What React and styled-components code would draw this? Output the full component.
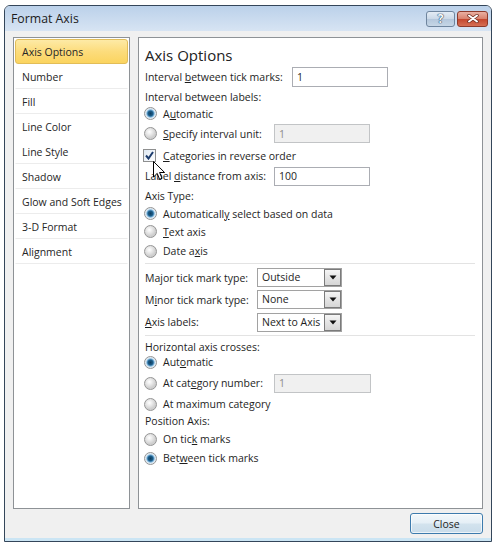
import React from 'react';
import styled, { createGlobalStyle } from 'styled-components';

const GlobalStyle = createGlobalStyle`
  body {
    margin: 0;
    background: #ffffff;
  }
`;

const Window = styled.div`
  margin: 5px 0 0 4px;
  width: 488px;
  height: 537px;
  box-sizing: border-box;
  border: 1px solid #34465a;
  border-radius: 6px 6px 0 0;
  display: flex;
  flex-direction: column;
  background: #f0f0f0;
  overflow: hidden;
  font-family: "Open Sans", "Noto Sans", sans-serif;
  color: #1e1e1e;
`;

const TitleBar = styled.div`
  height: 25px;
  flex: none;
  display: flex;
  align-items: center;
  padding: 0 3px 0 6px;
  background: linear-gradient(#bbd1ea, #d7e4f3);
`;

const Title = styled.div`
  flex: 1;
  font-size: 12.3px;
  color: #1b1b1b;
`;

const CaptionButton = styled.div`
  width: ${({ $w }) => $w}px;
  height: 16px;
  margin-left: 2px;
  box-sizing: border-box;
  border: 1px solid ${({ $red }) => ($red ? '#8d3a2b' : '#6f859e')};
  border-radius: 3px;
  display: flex;
  align-items: center;
  justify-content: center;
  background: ${({ $red }) => ($red
    ? 'linear-gradient(#eab0a2, #d9826e 48%, #c4472e 52%, #d66f54)'
    : 'linear-gradient(#e4ecf5, #cbd9e8 48%, #b4c7dc 52%, #c6d6e6)')};
  font-size: 12px;
  font-weight: bold;
  color: #f6f9fc;
  text-shadow: 0 0 1px #2a4565, 0 0 1px #2a4565, 0 0 1px #2a4565;
`;

const Body = styled.div`
  flex: 1;
  display: flex;
  flex-direction: column;
  padding: 6px 8px 4px;
`;

const Panels = styled.div`
  height: 472px;
  display: flex;
  gap: 8px;
`;

const NavList = styled.div`
  width: 117px;
  box-sizing: border-box;
  border: 1px solid #8e9296;
  background: #ffffff;
  padding: 1px;
`;

const NavItem = styled.div`
  height: 25px;
  box-sizing: border-box;
  display: flex;
  align-items: center;
  padding-left: 6px;
  font-size: 10.5px;
  color: #262626;
  border: 1px solid transparent;
  border-bottom-color: ${({ $line }) => ($line ? '#ececec' : 'transparent')};
  ${({ $active }) => $active && `
    border: 1px solid #e2bd58;
    border-radius: 3px;
    background: linear-gradient(#fdeaa6, #fcdc7c 50%, #fbd45f);
  `}
`;

const Content = styled.div`
  flex: 1;
  position: relative;
  box-sizing: border-box;
  border: 1px solid #8e9296;
  background: #ffffff;
  padding: 0 7px 0 6px;
`;

const Heading = styled.div`
  height: 29px;
  box-sizing: border-box;
  padding-top: 7px;
  line-height: 20px;
  font-size: 15px;
  color: #222222;
`;

const Row = styled.div`
  height: ${({ $h }) => $h}px;
  display: flex;
  align-items: center;
  font-size: 10.5px;
`;

const Label = styled.span`
  flex: none;
  width: ${({ $w }) => ($w ? `${$w}px` : 'auto')};
  white-space: nowrap;
`;

const Key = styled.span`
  text-decoration: underline;
`;

const Radio = styled.span`
  flex: none;
  width: 13px;
  height: 13px;
  margin: 0 6px 0 -1px;
  box-sizing: border-box;
  border-radius: 50%;
  border: 1px solid #959595;
  background: ${({ $on }) => ($on
    ? 'radial-gradient(circle, #0f3d5e 0, #1d5f8c 2.5px, #6aa7d2 3.5px, #d6e6f2 4.5px, #eef2f5 6px)'
    : 'radial-gradient(circle at 40% 35%, #ffffff 0, #e8e8e8 3px, #cfcfcf 6px)')};
`;

const Check = styled.span`
  flex: none;
  width: 13px;
  height: 13px;
  margin: 0 7px 0 -2px;
  box-sizing: border-box;
  border: 1px solid #8e8f8f;
  background: linear-gradient(135deg, #dfe9f3, #ffffff);
  display: flex;
  align-items: center;
  justify-content: center;
`;

const TextBox = styled.input`
  width: ${({ $w }) => $w}px;
  height: ${({ $h }) => $h}px;
  box-sizing: border-box;
  border: 1px solid ${({ disabled }) => (disabled ? '#c2c4c6' : '#abadb3')};
  background: ${({ disabled }) => (disabled ? '#f0f0f0' : '#ffffff')};
  color: ${({ disabled }) => (disabled ? '#8c8c8c' : '#1e1e1e')};
  padding: 0 4px;
  margin: 0;
  font-family: "Open Sans", "Noto Sans", sans-serif;
  font-size: 10.5px;
  outline: none;
`;

const Select = styled.div`
  width: 85px;
  height: 19px;
  box-sizing: border-box;
  border: 1px solid #a2a2a2;
  display: flex;
  align-items: stretch;
  background: #ffffff;
`;

const SelectValue = styled.span`
  flex: 1;
  padding-left: 4px;
  line-height: 17px;
  white-space: nowrap;
  overflow: hidden;
`;

const DropButton = styled.span`
  width: 17px;
  flex: none;
  box-sizing: border-box;
  border: 1px solid #7b7b7b;
  background: linear-gradient(#f5f5f5, #e4e4e4 50%, #d6d6d6);
  display: flex;
  align-items: center;
  justify-content: center;
`;

const Divider = styled.div`
  height: 1px;
  margin: 2px 0 3px;
  background: #e3e3e3;
`;

const Cursor = styled.svg`
  position: absolute;
  left: 14px;
  top: 123px;
`;

const Footer = styled.div`
  margin-top: 4px;
  display: flex;
  justify-content: flex-end;
`;

const CloseButton = styled.button`
  width: 73px;
  height: 21px;
  box-sizing: border-box;
  border: 1px solid #3d7bad;
  border-radius: 3px;
  background: linear-gradient(#f3f8fb, #e5eff6 48%, #d3e3ee 52%, #c9dcea);
  box-shadow: inset 0 0 0 1px #ffffffaa;
  font-family: "Open Sans", "Noto Sans", sans-serif;
  font-size: 10.5px;
  color: #1e1e1e;
  padding: 0;
`;

const BottomEdge = styled.div`
  height: 4px;
  flex: none;
  background: #cbe5f4;
`;

const navItems = [
  { text: 'Axis Options', active: true },
  { text: 'Number', line: true },
  { text: 'Fill', line: true },
  { text: 'Line Color' },
  { text: 'Line Style', line: true },
  { text: 'Shadow', line: true },
  { text: 'Glow and Soft Edges', line: true },
  { text: '3-D Format', line: true },
  { text: 'Alignment', line: true },
];

const Arrow = () => (
  <svg width="8" height="5" viewBox="0 0 8 5">
    <path d="M0.5 0.5 L7.5 0.5 L4 4.5 Z" fill="#111" />
  </svg>
);

const Dropdown = ({ value }) => (
  <Select>
    <SelectValue>{value}</SelectValue>
    <DropButton><Arrow /></DropButton>
  </Select>
);

const App = () => (
  <>
    <GlobalStyle />
    <Window>
      <TitleBar>
        <Title>Format Axis</Title>
        <CaptionButton $w={29}>?</CaptionButton>
        <CaptionButton $w={31} $red>
          <svg width="12" height="9" viewBox="0 0 12 9">
            <path d="M2 1.5 L10 7.5 M10 1.5 L2 7.5" stroke="#6b2a1e" strokeWidth="3.4" strokeLinecap="round" />
            <path d="M2 1.5 L10 7.5 M10 1.5 L2 7.5" stroke="#ffffff" strokeWidth="2" strokeLinecap="round" />
          </svg>
        </CaptionButton>
      </TitleBar>
      <Body>
        <Panels>
          <NavList>
            {navItems.map((item) => (
              <NavItem key={item.text} $active={item.active} $line={item.line}>{item.text}</NavItem>
            ))}
          </NavList>
          <Content>
            <Heading>Axis Options</Heading>
            <Row $h={20}>
              <Label $w={147}>Interval <Key>b</Key>etween tick marks:</Label>
              <TextBox $w={96} $h={20} readOnly defaultValue="1" />
            </Row>
            <Row $h={19}><Label>Interval between labels:</Label></Row>
            <Row $h={15}><Radio $on /><Label>A<Key>u</Key>tomatic</Label></Row>
            <Row $h={25}>
              <Radio />
              <Label $w={111}><Key>S</Key>pecify interval unit:</Label>
              <TextBox $w={96} $h={19} disabled defaultValue="1" />
            </Row>
            <Row $h={19}>
              <Check>
                <svg width="9" height="9" viewBox="0 0 9 9">
                  <path d="M1 4.5 L3.5 7.5 L8 1" fill="none" stroke="#1d3d6e" strokeWidth="2" />
                </svg>
              </Check>
              <Label><Key>C</Key>ategories in reverse order</Label>
            </Row>
            <Row $h={22}>
              <Label $w={129}>Label <Key>d</Key>istance from axis:</Label>
              <TextBox $w={96} $h={19} readOnly defaultValue="100" />
            </Row>
            <Row $h={18}><Label>Axis Type:</Label></Row>
            <Row $h={17}><Radio $on /><Label>Automaticall<Key>y</Key> select based on data</Label></Row>
            <Row $h={19}><Radio /><Label><Key>T</Key>ext axis</Label></Row>
            <Row $h={20}><Radio /><Label>Date a<Key>x</Key>is</Label></Row>
            <Divider />
            <Row $h={21}>
              <Label $w={112}>Ma<Key>j</Key>or tick mark type:</Label>
              <Dropdown value="Outside" />
            </Row>
            <Row $h={23}>
              <Label $w={112}>M<Key>i</Key>nor tick mark type:</Label>
              <Dropdown value="None" />
            </Row>
            <Row $h={22}>
              <Label $w={112}><Key>A</Key>xis labels:</Label>
              <Dropdown value="Next to Axis" />
            </Row>
            <Divider />
            <Row $h={15}><Label>Horizontal axis crosses:</Label></Row>
            <Row $h={16}><Radio $on /><Label>Aut<Key>o</Key>matic</Label></Row>
            <Row $h={26}>
              <Radio />
              <Label $w={111}>At cat<Key>e</Key>gory number:</Label>
              <TextBox $w={97} $h={19} disabled defaultValue="1" />
            </Row>
            <Row $h={16}><Radio /><Label>At maximum cate<Key>g</Key>ory</Label></Row>
            <Row $h={17}><Label>Position Axis:</Label></Row>
            <Row $h={20}><Radio /><Label>On tic<Key>k</Key> marks</Label></Row>
            <Row $h={18}><Radio $on /><Label>Bet<Key>w</Key>een tick marks</Label></Row>
            <Cursor width="13" height="20" viewBox="0 0 13 20">
              <path d="M0.5 0.5 L0.5 16 L4.2 12.4 L6.6 18.3 L9 17.3 L6.6 11.5 L11.6 11.5 Z" fill="#ffffff" stroke="#000000" strokeWidth="1" strokeLinejoin="miter" />
            </Cursor>
          </Content>
        </Panels>
        <Footer>
          <CloseButton type="button">Close</CloseButton>
        </Footer>
      </Body>
      <BottomEdge />
    </Window>
  </>
);

export default App;
